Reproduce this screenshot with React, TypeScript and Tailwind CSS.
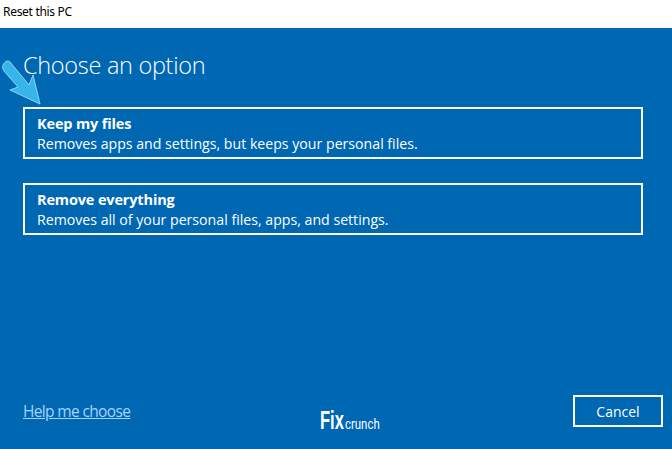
const font = "font-['Open_Sans','Noto_Sans',sans-serif]";

function OptionCard({ title, description }: { title: string; description: string }) {
  return (
    <div className="w-[620px] h-[52px] border-2 border-white px-3 pt-[5px] text-white">
      <div className="text-[14.5px] leading-[20px] font-bold tracking-[-0.15px]">{title}</div>
      <div className="text-[14.15px] leading-[20px]">{description}</div>
    </div>
  );
}

export default function App() {
  return (
    <div className={`relative w-[672px] h-[449px] overflow-hidden flex flex-col bg-[#0067b3] ${font}`}>
      <div className="h-[28px] bg-white pl-[3px] pt-[3px] text-[12px] leading-[18px] text-black font-['Noto_Sans',sans-serif] tracking-[-0.3px]">
        Reset this PC
      </div>

      <div className="flex-1 flex flex-col pl-[23px] pr-[9px]">
        <h1 className="mt-[20px] h-[34px] text-[23.5px] leading-[34px] font-light text-white tracking-[-0.3px]">Choose an option</h1>
        <div className="mt-[25px] flex flex-col gap-6">
          <OptionCard title="Keep my files" description="Removes apps and settings, but keeps your personal files." />
          <OptionCard title="Remove everything" description="Removes all of your personal files, apps, and settings." />
        </div>

        <div className="mt-auto mb-[22px] flex items-center justify-between">
          <a className="text-[15.5px] leading-[20px] text-[#a6d3ff] underline tracking-[-0.65px]">Help me choose</a>
          <div className="w-[90px] h-[32px] border-2 border-white flex items-center justify-center text-[14px] text-white">
            Cancel
          </div>
        </div>
      </div>

      {/* arrow */}
      <svg className="absolute left-[2px] top-[60px]" width="42" height="48" viewBox="0 0 42 48">
        <path
          d="M1 5 C3 1 6 0 8 2 L27 25 L31 15 L38 44 L8 30 L16 27 L2 11 C0.5 9 0.5 7 1 5 Z"
          fill="#35b5ea"
          stroke="#8fd6f2"
          strokeWidth="1"
          strokeLinejoin="round"
        />
      </svg>

      {/* logo */}
      <div className="absolute left-[320px] top-[408px] flex items-end text-white leading-none">
        <span className="w-[25px] text-[25px] font-bold origin-left scale-x-[0.66] font-['Liberation_Sans',sans-serif]">Fix</span>
        <span className="w-[35px] text-[15px] origin-left scale-x-[0.76] font-['Roboto',sans-serif] mb-[1px]">crunch</span>
      </div>
    </div>
  );
}
